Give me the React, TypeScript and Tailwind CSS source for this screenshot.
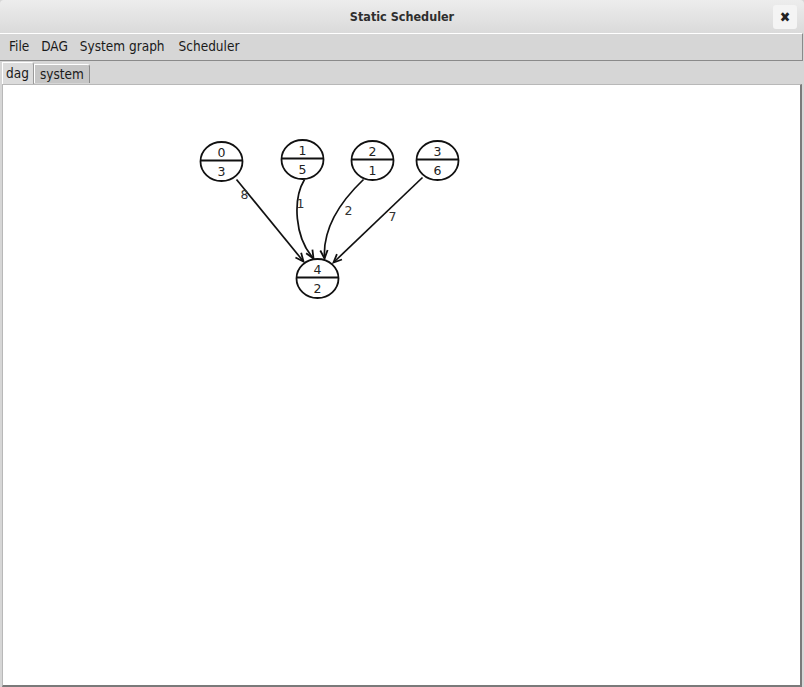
import React from 'react';

const font = '"DejaVu Sans Condensed", "DejaVu Sans", sans-serif';

const nodes = [
  { id: '0', w: '3', x: 221, y: 162 },
  { id: '1', w: '5', x: 302, y: 160 },
  { id: '2', w: '1', x: 372, y: 161 },
  { id: '3', w: '6', x: 437, y: 161 },
  { id: '4', w: '2', x: 317, y: 279 },
];

const edges = [
  { d: 'M236 180 L303 262', tip: [303, 262], from: [236, 180], label: '8', lx: 244, ly: 199 },
  { d: 'M304 180 C292 200 294 238 313 259', tip: [313, 259], from: [304, 244], label: '1', lx: 300, ly: 208 },
  { d: 'M363 180 C342 200 322 228 324 259', tip: [324, 259], from: [323, 244], label: '2', lx: 348, ly: 215 },
  { d: 'M422 178 L333 263', tip: [333, 263], from: [422, 178], label: '7', lx: 392, ly: 221 },
];

function Arrow({ tip, from }: { tip: number[]; from: number[] }) {
  const ang = Math.atan2(tip[1] - from[1], tip[0] - from[0]);
  const len = 9;
  const spread = 0.42;
  const a1 = [tip[0] - len * Math.cos(ang - spread), tip[1] - len * Math.sin(ang - spread)];
  const a2 = [tip[0] - len * Math.cos(ang + spread), tip[1] - len * Math.sin(ang + spread)];
  return (
    <path
      d={`M${a1[0]} ${a1[1]} L${tip[0]} ${tip[1]} L${a2[0]} ${a2[1]}`}
      fill="none"
      stroke="#111"
      strokeWidth={1.8}
    />
  );
}

function DagGraph() {
  return (
    <svg width={800} height={600} viewBox="2.5 85.5 800 600" className="block">
      {edges.map((e) => (
        <g key={e.label}>
          <path d={e.d} fill="none" stroke="#111" strokeWidth={1.7} />
          <Arrow tip={e.tip} from={e.from} />
          <text x={e.lx} y={e.ly} fontSize={12.5} fill="#333" textAnchor="middle" fontFamily="DejaVu Sans, sans-serif">
            {e.label}
          </text>
        </g>
      ))}
      {nodes.map((n) => (
        <g key={n.id}>
          <ellipse cx={n.x} cy={n.y} rx={21} ry={19.5} fill="#fff" stroke="#111" strokeWidth={1.8} />
          <line x1={n.x - 21} y1={n.y - 1} x2={n.x + 21} y2={n.y - 1} stroke="#111" strokeWidth={1.8} />
          <text x={n.x} y={n.y - 5} fontSize={12.5} fill="#222" textAnchor="middle" fontFamily="DejaVu Sans, sans-serif">
            {n.id}
          </text>
          <text x={n.x} y={n.y + 14} fontSize={12.5} fill="#222" textAnchor="middle" fontFamily="DejaVu Sans, sans-serif">
            {n.w}
          </text>
        </g>
      ))}
    </svg>
  );
}

export default function App() {
  return (
    <div className="w-[804px] h-[687px] flex flex-col bg-[#d6d6d6] overflow-hidden" style={{ fontFamily: font }}>
      <div className="h-[33px] shrink-0 relative flex items-center justify-center bg-gradient-to-b from-[#ededed] to-[#dadada] rounded-t-[4px]">
        <span className="text-[12.5px] font-bold text-[#2e2e2e] pt-[1px]">Static Scheduler</span>
        <button className="absolute right-[7px] top-[5px] w-[24px] h-[24px] rounded-[3px] bg-[#f4f4f4] flex items-center justify-center text-[14px] text-[#222]">
          ✖
        </button>
      </div>
      <div className="h-[28px] shrink-0 flex items-center gap-[12px] pl-[9px] pb-[1px] bg-[#d6d6d6] border-t border-white border-b border-b-[#8a8a8a] border-r border-r-[#8a8a8a] text-[13.5px] text-[#1a1a1a] mr-[1px]">
        <span>File</span>
        <span>DAG</span>
        <span>System graph</span>
        <span className="ml-[2px]">Scheduler</span>
      </div>
      <div className="h-[23px] shrink-0 flex items-end pl-[2px] bg-[#d6d6d6] text-[13.5px] text-[#1a1a1a]">
        <div className="h-[22px] pl-[3px] pr-[4px] flex items-center bg-[#dcdcdc] border-l border-t border-white border-r border-r-[#9a9a9a] rounded-tr-[3px]">
          dag
        </div>
        <div className="h-[19px] mb-[1px] px-[5px] flex items-center bg-[#c6c6c6] border-t border-l border-white border-r border-r-[#8a8a8a] rounded-tr-[3px]">
          system
        </div>
      </div>
      <div className="flex-1 mx-[2px] mb-[2px] bg-white border-l border-t border-[#b8b8b8] border-r-2 border-r-[#7a7a7a] border-b-2 border-b-[#7a7a7a]">
        <DagGraph />
      </div>
    </div>
  );
}
